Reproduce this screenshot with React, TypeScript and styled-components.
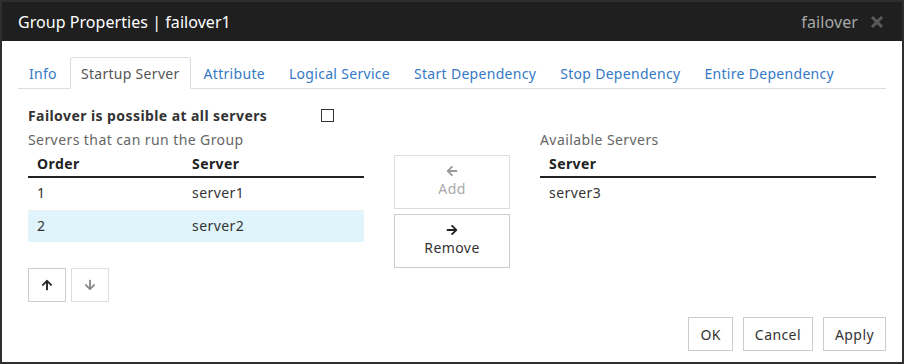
import { FunctionComponent } from 'react';
import styled, { createGlobalStyle } from 'styled-components';
import { FaArrowLeft, FaArrowRight, FaArrowUp, FaArrowDown } from 'react-icons/fa';

const GlobalStyle = createGlobalStyle`
    html, body {
        margin: 0;
        padding: 0;
        background: #ffffff;
    }
    body {
        font-family: "Noto Sans", "Liberation Sans", Arial, sans-serif;
        font-size: 14px;
        letter-spacing: 0.42px;
        color: #333333;
    }
`;

const accentColor = '#3479c5';

const Window = styled.div`
    width: 904px;
    height: 364px;
    box-sizing: border-box;
    border: 2px solid #2e2e2e;
    display: flex;
    flex-direction: column;
    background: #ffffff;
`;

const TitleBar = styled.div`
    height: 39px;
    background: #1f1f1f;
    display: flex;
    align-items: center;
    padding: 0 18px 0 16px;
    flex-shrink: 0;
`;

const Title = styled.div`
    flex: 1;
    color: #ffffff;
    font-size: 16px;
    letter-spacing: 0.05px;
`;

const TitleRight = styled.div`
    color: #a8a8a8;
    font-size: 16px;
    letter-spacing: 0.1px;
    margin-right: 12px;
`;

const Body = styled.div`
    flex: 1;
    padding: 16px 16px 0 16px;
    display: flex;
    flex-direction: column;
`;

const TabBar = styled.div`
    display: flex;
    height: 31px;
    border-bottom: 1px solid #dddddd;
`;

const Tab = styled.div<{ $active?: boolean }>`
    padding: 0 10px;
    margin-right: 2px;
    margin-bottom: -1px;
    display: flex;
    align-items: center;
    box-sizing: border-box;
    height: 32px;
    letter-spacing: 0.3px;
    border: 1px solid ${p => (p.$active ? '#dddddd' : 'transparent')};
    border-bottom-color: ${p => (p.$active ? '#ffffff' : 'transparent')};
    border-radius: 3px 3px 0 0;
    color: ${p => (p.$active ? '#555555' : accentColor)};
    background: ${p => (p.$active ? '#ffffff' : 'transparent')};
`;

const TabContent = styled.div`
    padding: 14px 10px 0 10px;
`;

const FailoverRow = styled.div`
    display: flex;
    align-items: center;
    height: 24px;
`;

const FailoverLabel = styled.div`
    width: 293px;
    font-weight: bold;
    color: #333333;
`;

const CheckBox = styled.div`
    width: 11px;
    height: 11px;
    border: 1px solid #333333;
    background: #ffffff;
`;

const Columns = styled.div`
    display: grid;
    grid-template-columns: 336px 116px 336px;
    column-gap: 30px;
`;

const Column = styled.div`
    display: flex;
    flex-direction: column;
`;

const Caption = styled.div`
    color: #666666;
    height: 22px;
    line-height: 22px;
    margin-top: 2px;
`;

const TableHead = styled.div`
    display: flex;
    height: 27px;
    box-sizing: border-box;
    align-items: center;
    border-bottom: 2px solid #222222;
    font-weight: bold;
    color: #222222;
`;

const Row = styled.div<{ $selected?: boolean }>`
    display: flex;
    height: 32px;
    align-items: center;
    background: ${p => (p.$selected ? '#dff4fb' : 'transparent')};
    border-top: ${p => (p.$selected ? '1px solid #eeeeee' : 'none')};
    box-sizing: border-box;
    padding-bottom: 3px;
    color: #333333;
`;

const Cell = styled.div<{ $width?: number }>`
    padding-left: 9px;
    width: ${p => (p.$width ? `${p.$width}px` : 'auto')};
    flex: ${p => (p.$width ? 'none' : '1')};
    box-sizing: border-box;
`;

const MoveButtons = styled.div`
    display: flex;
    gap: 5px;
    margin-top: 26px;
`;

const IconButton = styled.div<{ $disabled?: boolean }>`
    width: 38px;
    height: 34px;
    box-sizing: border-box;
    border: 1px solid ${p => (p.$disabled ? '#dddddd' : '#cccccc')};
    display: flex;
    align-items: center;
    justify-content: center;
    color: ${p => (p.$disabled ? '#8a8a8a' : '#222222')};
`;

const Middle = styled.div`
    display: flex;
    flex-direction: column;
    gap: 5px;
    padding-top: 28px;
`;

const TransferButton = styled.div<{ $disabled?: boolean }>`
    height: 54px;
    box-sizing: border-box;
    border: 1px solid ${p => (p.$disabled ? '#dddddd' : '#cccccc')};
    display: flex;
    flex-direction: column;
    align-items: center;
    justify-content: center;
    gap: 2px;
    line-height: 20px;
    color: ${p => (p.$disabled ? '#aaaaaa' : '#333333')};
`;

const Footer = styled.div`
    margin-top: auto;
    display: flex;
    justify-content: flex-end;
    gap: 10px;
    padding: 0 0 11px 0;
`;

const FooterButton = styled.div`
    height: 34px;
    padding: 0 11px;
    box-sizing: border-box;
    border: 1px solid #cccccc;
    display: flex;
    align-items: center;
    color: #333333;
`;

const CloseIcon: FunctionComponent = () => (
    <svg width="14" height="14" viewBox="0 0 14 14">
        <path d="M2 2 L12 12 M12 2 L2 12" stroke="#5a5a5a" strokeWidth="3" />
    </svg>
);

const tabs = ['Info', 'Startup Server', 'Attribute', 'Logical Service', 'Start Dependency', 'Stop Dependency', 'Entire Dependency'];

export default function App() {
    return (
        <>
            <GlobalStyle />
            <Window>
                <TitleBar>
                    <Title>Group Properties | failover1</Title>
                    <TitleRight>failover</TitleRight>
                    <CloseIcon />
                </TitleBar>
                <Body>
                    <TabBar>
                        {tabs.map(t => (
                            <Tab key={t} $active={t === 'Startup Server'}>{t}</Tab>
                        ))}
                    </TabBar>
                    <TabContent>
                        <FailoverRow>
                            <FailoverLabel>Failover is possible at all servers</FailoverLabel>
                            <CheckBox />
                        </FailoverRow>
                        <Columns>
                            <Column>
                                <Caption>Servers that can run the Group</Caption>
                                <TableHead>
                                    <Cell $width={155}>Order</Cell>
                                    <Cell>Server</Cell>
                                </TableHead>
                                <Row>
                                    <Cell $width={155}>1</Cell>
                                    <Cell>server1</Cell>
                                </Row>
                                <Row $selected>
                                    <Cell $width={155}>2</Cell>
                                    <Cell>server2</Cell>
                                </Row>
                                <MoveButtons>
                                    <IconButton><FaArrowUp size={12} /></IconButton>
                                    <IconButton $disabled><FaArrowDown size={12} /></IconButton>
                                </MoveButtons>
                            </Column>
                            <Middle>
                                <TransferButton $disabled>
                                    <FaArrowLeft size={12} color="#999999" />
                                    Add
                                </TransferButton>
                                <TransferButton>
                                    <FaArrowRight size={12} color="#222222" />
                                    Remove
                                </TransferButton>
                            </Middle>
                            <Column>
                                <Caption>Available Servers</Caption>
                                <TableHead>
                                    <Cell>Server</Cell>
                                </TableHead>
                                <Row>
                                    <Cell>server3</Cell>
                                </Row>
                            </Column>
                        </Columns>
                    </TabContent>
                    <Footer>
                        <FooterButton>OK</FooterButton>
                        <FooterButton>Cancel</FooterButton>
                        <FooterButton>Apply</FooterButton>
                    </Footer>
                </Body>
            </Window>
        </>
    );
}
